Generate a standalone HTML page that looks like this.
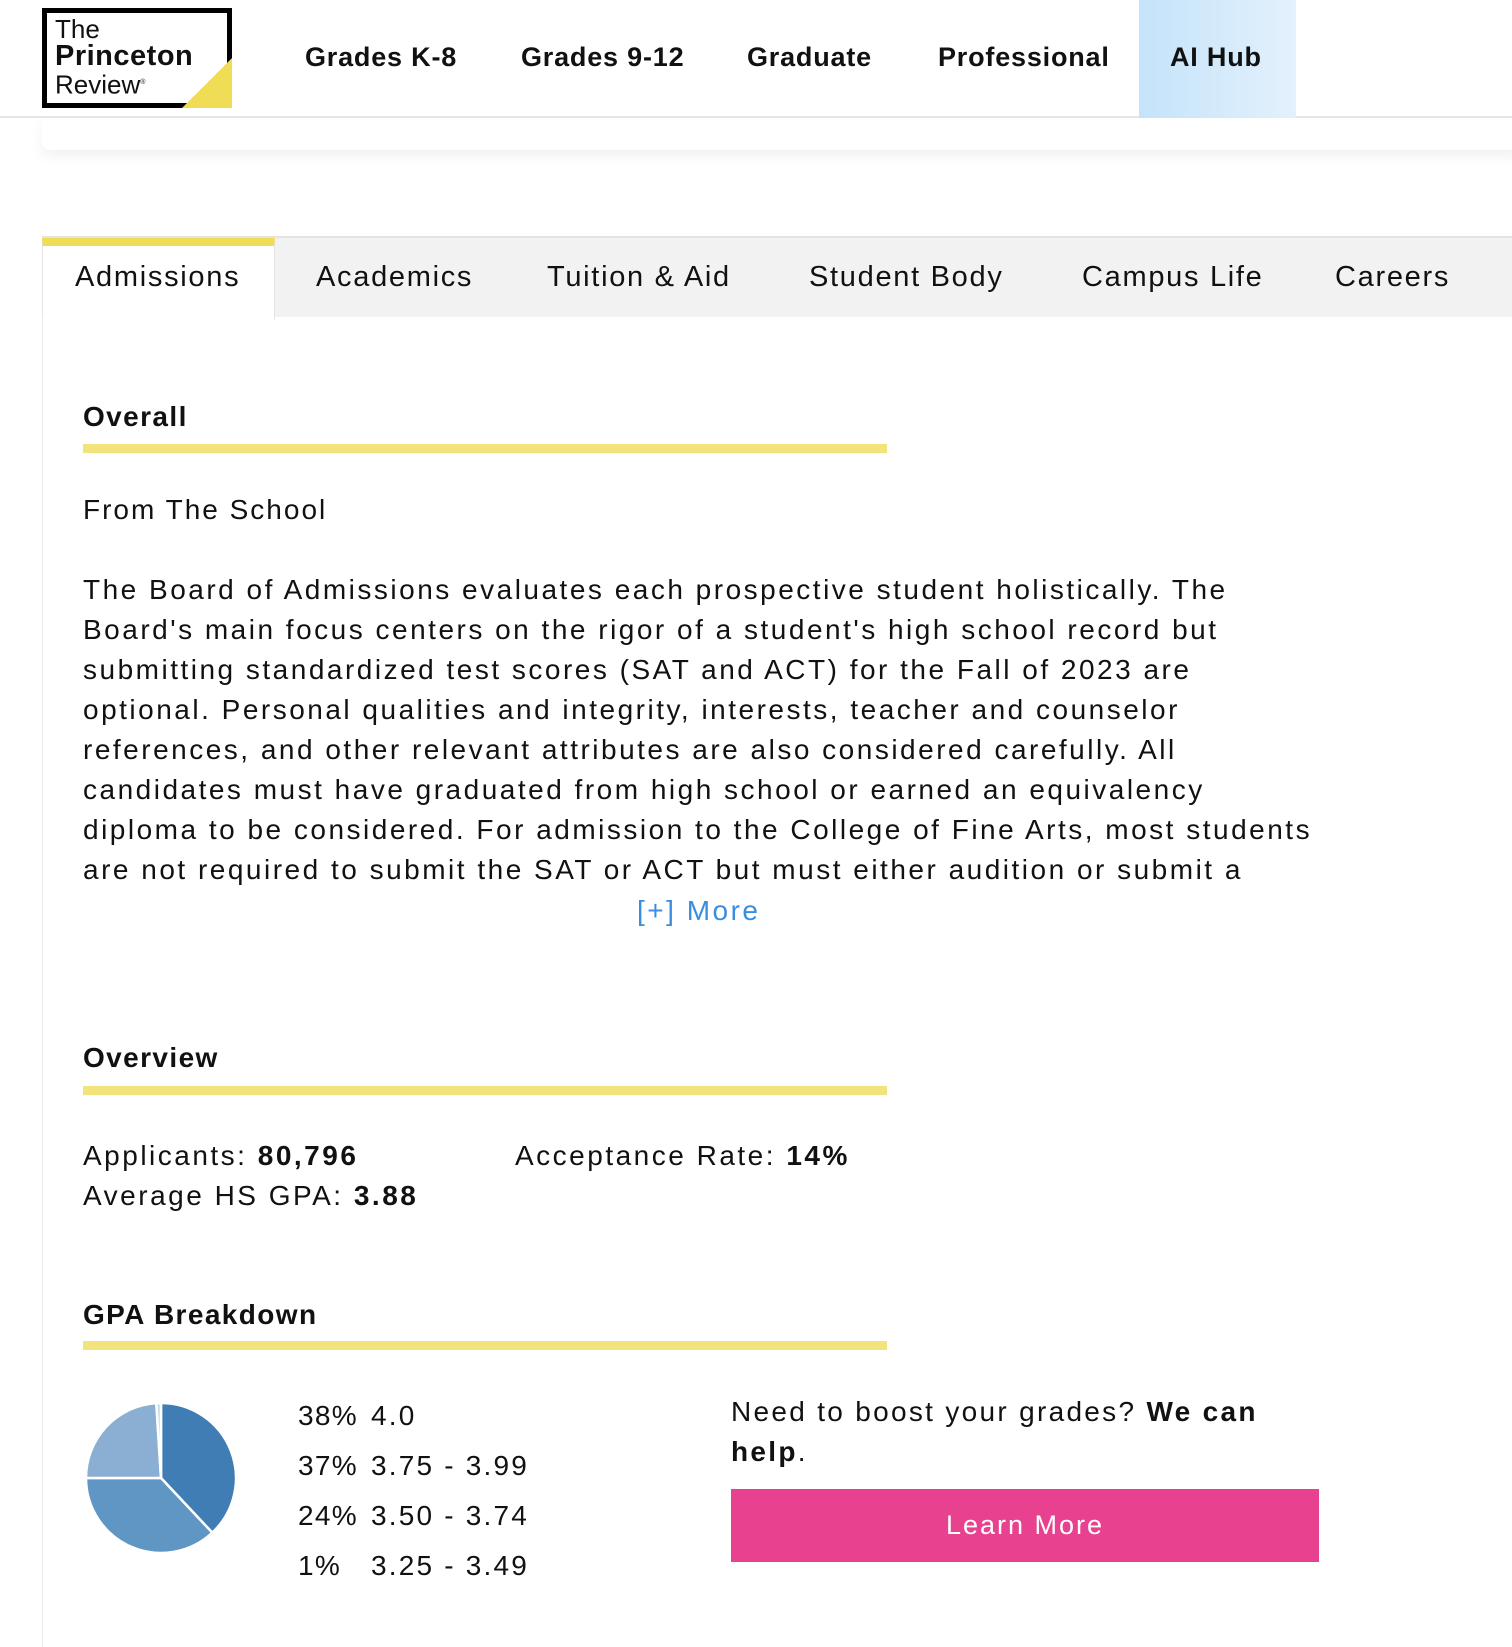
<!DOCTYPE html>
<html><head><meta charset="utf-8"><style>
*{margin:0;padding:0;box-sizing:border-box}
body{width:1512px;height:1642px;background:#fff;font-family:"Liberation Sans",sans-serif;color:#111;position:relative;overflow:hidden}
.a{position:absolute;white-space:nowrap}
.nav{font-weight:bold;font-size:27px;top:42px;letter-spacing:0.8px}
.tab{font-size:29px;top:261px;color:#111;letter-spacing:1.7px}
.h{font-weight:bold;font-size:28px;left:83px;letter-spacing:1.4px}
.yl{position:absolute;left:83px;width:804px;height:9px;background:#f2e47a}
.t{font-size:28px;letter-spacing:2.5px}
.p{font-size:28px;line-height:40px;letter-spacing:2.5px}
</style></head><body>
<div class="a" style="left:0;top:0;width:1512px;height:118px;border-bottom:2px solid #e6e6e6"></div>
<div class="a" style="left:42px;top:8px;width:190px;height:100px;background:#000;overflow:hidden">
  <div style="position:absolute;left:5px;top:5px;width:180px;height:90px;background:#fff"></div>
  <div style="position:absolute;left:140px;top:50px;width:0;height:0;border-left:50px solid transparent;border-bottom:50px solid #f0dc55"></div>
  <div style="position:absolute;left:13px;top:8px;font-size:26px;line-height:26px">The</div>
  <div style="position:absolute;left:13px;top:34px;font-size:29px;line-height:28px;font-weight:bold;letter-spacing:0.5px">Princeton</div>
  <div style="position:absolute;left:13px;top:62px;font-size:26px;line-height:26px">Review<sup style="font-size:7px">®</sup></div>
</div>
<div class="a nav" style="left:305px">Grades K-8</div>
<div class="a nav" style="left:521px">Grades 9-12</div>
<div class="a nav" style="left:747px">Graduate</div>
<div class="a nav" style="left:938px">Professional</div>
<div class="a" style="left:1139px;top:0;width:157px;height:118px;background:linear-gradient(90deg,#c5e3fa,#e3f1fc)"></div>
<div class="a nav" style="left:1170px">AI Hub</div>
<div class="a" style="left:42px;top:120px;width:1480px;height:30px;background:#fff;border-radius:0 0 0 8px;box-shadow:0 6px 14px rgba(0,0,0,.06)"></div>
<div class="a" style="left:42px;top:236px;width:1470px;height:81px;background:#f2f2f2;border-top:2px solid #e4e4e4"></div>
<div class="a" style="left:42px;top:238px;width:233px;height:82px;background:#fff;border-top:8px solid #f0dc55;border-right:1px solid #e4e4e4;border-left:1px solid #e4e4e4"></div>
<div class="a tab" style="left:75px">Admissions</div>
<div class="a tab" style="left:316px">Academics</div>
<div class="a tab" style="left:547px">Tuition &amp; Aid</div>
<div class="a tab" style="left:809px">Student Body</div>
<div class="a tab" style="left:1082px">Campus Life</div>
<div class="a tab" style="left:1335px">Careers</div>
<div class="a" style="left:42px;top:317px;width:1px;height:1330px;background:#ececec"></div>
<div class="a h" style="top:401px">Overall</div>
<div class="yl" style="top:444px"></div>
<div class="a t" style="left:83px;top:494px;letter-spacing:2px">From The School</div>
<div class="a p" style="left:83px;top:570px">The Board of Admissions evaluates each prospective student holistically. The<br>Board's main focus centers on the rigor of a student's high school record but<br>submitting standardized test scores (SAT and ACT) for the Fall of 2023 are<br>optional. Personal qualities and integrity, interests, teacher and counselor<br>references, and other relevant attributes are also considered carefully. All<br>candidates must have graduated from high school or earned an equivalency<br>diploma to be considered. For admission to the College of Fine Arts, most students<br>are not required to submit the SAT or ACT but must either audition or submit a</div>
<div class="a t" style="left:637px;top:895px;color:#3b8de0">[+] More</div>
<div class="a h" style="top:1042px">Overview</div>
<div class="yl" style="top:1086px"></div>
<div class="a t" style="left:83px;top:1140px">Applicants: <b>80,796</b></div>
<div class="a t" style="left:83px;top:1180px">Average HS GPA: <b>3.88</b></div>
<div class="a t" style="left:515px;top:1140px">Acceptance Rate: <b>14%</b></div>
<div class="a h" style="top:1299px">GPA Breakdown</div>
<div class="yl" style="top:1341px"></div>
<svg class="a" style="left:83px;top:1400px" width="156" height="156" viewBox="-78 -78 156 156">
<g stroke="#fff" stroke-width="2.5">
<path d="M0 0 L0 -75 A75 75 0 0 1 51.3 54.7 Z" fill="#417db5"/>
<path d="M0 0 L51.3 54.7 A75 75 0 0 1 -75 0 Z" fill="#6096c4"/>
<path d="M0 0 L-75 0 A75 75 0 0 1 -4.7 -74.9 Z" fill="#8aafd2"/>
<path d="M0 0 L-4.7 -74.9 A75 75 0 0 1 0 -75 Z" fill="#c8d9ea"/>
</g></svg>
<div class="a t" style="left:298px;top:1391px;line-height:50px;letter-spacing:1.3px">38%<br>37%<br>24%<br>1%</div>
<div class="a t" style="left:371px;top:1391px;line-height:50px;letter-spacing:2.2px">4.0<br>3.75 - 3.99<br>3.50 - 3.74<br>3.25 - 3.49</div>
<div class="a t" style="left:731px;top:1392px;line-height:40px;letter-spacing:2.3px">Need to boost your grades? <b>We can</b><br><b>help</b>.</div>
<div class="a" style="left:731px;top:1489px;width:588px;height:73px;background:#e8418f;color:#fff;font-size:27px;text-align:center;line-height:73px;letter-spacing:2px">Learn More</div>
</body></html>
